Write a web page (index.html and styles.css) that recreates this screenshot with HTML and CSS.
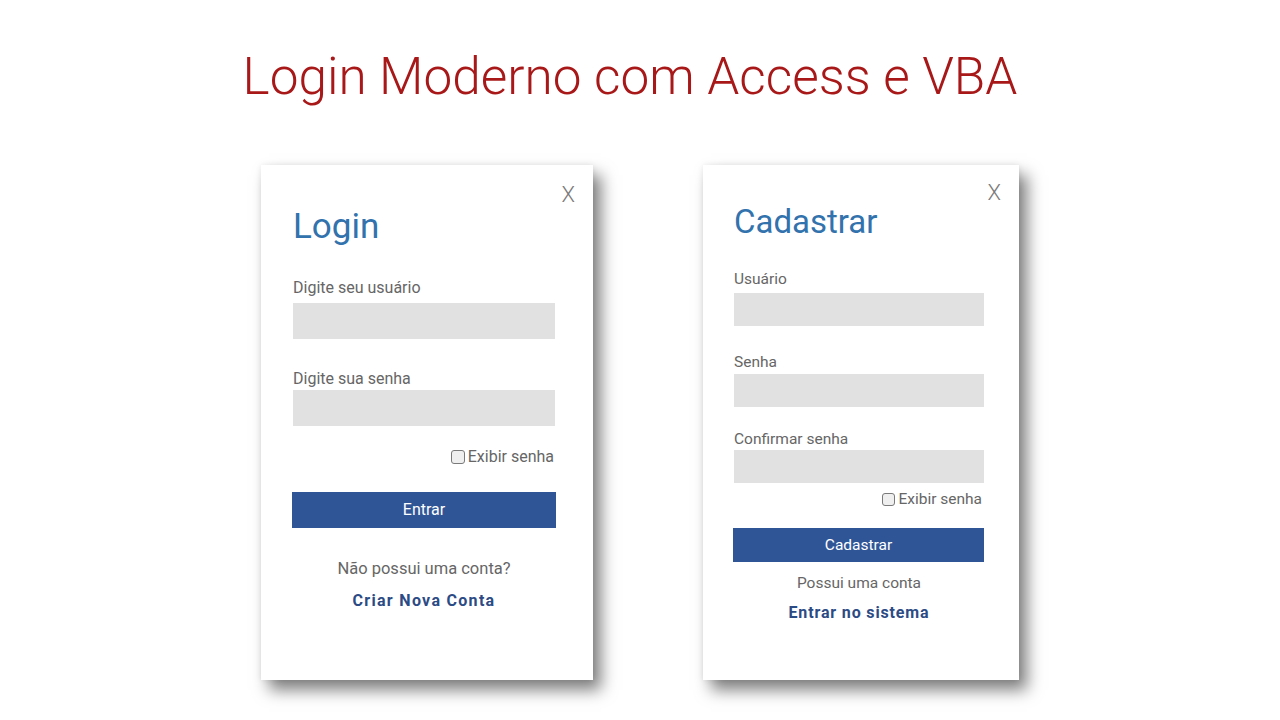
FILE: index.html
```html
<!DOCTYPE html>
<html lang="pt-BR">
<head>
<meta charset="utf-8">
<title>Login Moderno com Access e VBA</title>
<link rel="stylesheet" href="styles.css">
</head>
<body>
<div class="page">
  <h1 class="title">Login Moderno com Access e VBA</h1>
  <div class="cards">
    <div class="card card-login">
      <span class="close">X</span>
      <h2 class="heading">Login</h2>
      <div class="label l1">Digite seu usuário</div>
      <div class="field f1"></div>
      <div class="label l2">Digite sua senha</div>
      <div class="field f2"></div>
      <div class="check-row">
        <span class="box"></span><span>Exibir senha</span>
      </div>
      <div class="button">Entrar</div>
      <div class="question">Não possui uma conta?</div>
      <div class="link">Criar Nova Conta</div>
    </div>
    <div class="card card-reg">
      <span class="close">X</span>
      <h2 class="heading">Cadastrar</h2>
      <div class="label r1">Usuário</div>
      <div class="field g1"></div>
      <div class="label r2">Senha</div>
      <div class="field g2"></div>
      <div class="label r3">Confirmar senha</div>
      <div class="field g3"></div>
      <div class="check-row">
        <span class="box"></span><span>Exibir senha</span>
      </div>
      <div class="button">Cadastrar</div>
      <div class="question">Possui uma conta</div>
      <div class="link">Entrar no sistema</div>
    </div>
  </div>
</div>
</body>
</html>
```

FILE: styles.css
```css
* { box-sizing: border-box; }
html, body { margin: 0; padding: 0; background: #ffffff; }
body {
  width: 1280px;
  height: 720px;
  overflow: hidden;
  font-family: Roboto, "Liberation Sans", Arial, sans-serif;
}
.page {
  display: flex;
  flex-direction: column;
  align-items: center;
}
.title {
  margin: 51px 20px 0 0;
  font-size: 51.3px;
  line-height: 52px;
  font-weight: 300;
  color: #a81818;
  white-space: nowrap;
}
.cards {
  margin-top: 62px;
  display: flex;
  gap: 110px;
}
.card {
  position: relative;
  height: 515px;
  background: #ffffff;
  display: flex;
  flex-direction: column;
  box-shadow: 8px 10px 15px rgba(0,0,0,0.5), 0 0 6px rgba(0,0,0,0.08);
}
.close {
  position: absolute;
  font-size: 22px;
  line-height: 24px;
  font-weight: 300;
  color: #7a7a7a;
}
.heading {
  margin: 0;
  font-weight: 400;
  color: #3272ad;
}
.label { color: #666666; }
.field { background: #e1e1e1; }
.check-row {
  display: flex;
  justify-content: flex-end;
  align-items: center;
  color: #666666;
}
.box {
  border: 1px solid #7a7a7a;
  border-radius: 3px;
  background: #efefef;
  margin-right: 3px;
}
.button {
  background: #2f5597;
  color: #ffffff;
  text-align: center;
}
.question {
  color: #666666;
  text-align: center;
}
.link {
  color: #2c4b85;
  font-weight: 700;
  text-align: center;
}

/* Login card */
.card-login {
  width: 332px;
  padding: 42px 38px 0 32px;
}
.card-login .close { top: 18px; right: 18px; }
.card-login .heading { font-size: 35px; line-height: 40px; }
.card-login .label { font-size: 16px; line-height: 19px; }
.card-login .l1 { margin-top: 31px; }
.card-login .f1 { margin-top: 6px; height: 36px; }
.card-login .l2 { margin-top: 30px; }
.card-login .f2 { margin-top: 2px; height: 36px; }
.card-login .check-row { margin-top: 21px; font-size: 16px; line-height: 19px; margin-right: 1px; }
.card-login .box { width: 14px; height: 14px; }
.card-login .button { margin-top: 26px; height: 36px; line-height: 36px; font-size: 16px; margin-left: -1px; margin-right: -1px; }
.card-login .question { margin-top: 31px; font-size: 16.5px; line-height: 20px; }
.card-login .link { margin-top: 12px; font-size: 16px; line-height: 19px; letter-spacing: 1.3px; }

/* Register card */
.card-reg {
  width: 316px;
  padding: 39px 35px 0 31px;
}
.card-reg .close { top: 16px; right: 18px; }
.card-reg .heading { font-size: 33px; line-height: 36px; }
.card-reg .label { font-size: 15.5px; line-height: 18px; }
.card-reg .r1 { margin-top: 30px; }
.card-reg .g1 { margin-top: 5px; height: 33px; }
.card-reg .r2 { margin-top: 27px; }
.card-reg .g2 { margin-top: 3px; height: 33px; }
.card-reg .r3 { margin-top: 23px; }
.card-reg .g3 { margin-top: 2px; height: 33px; }
.card-reg .check-row { margin-top: 7px; font-size: 15.5px; line-height: 18px; margin-right: 2px; }
.card-reg .box { width: 13px; height: 13px; }
.card-reg .button { margin-top: 20px; height: 34px; line-height: 34px; font-size: 15.5px; margin-left: -1px; }
.card-reg .question { margin-top: 12px; font-size: 15.5px; line-height: 18px; }
.card-reg .link { margin-top: 11px; font-size: 16px; line-height: 19px; letter-spacing: 0.85px; }
```
